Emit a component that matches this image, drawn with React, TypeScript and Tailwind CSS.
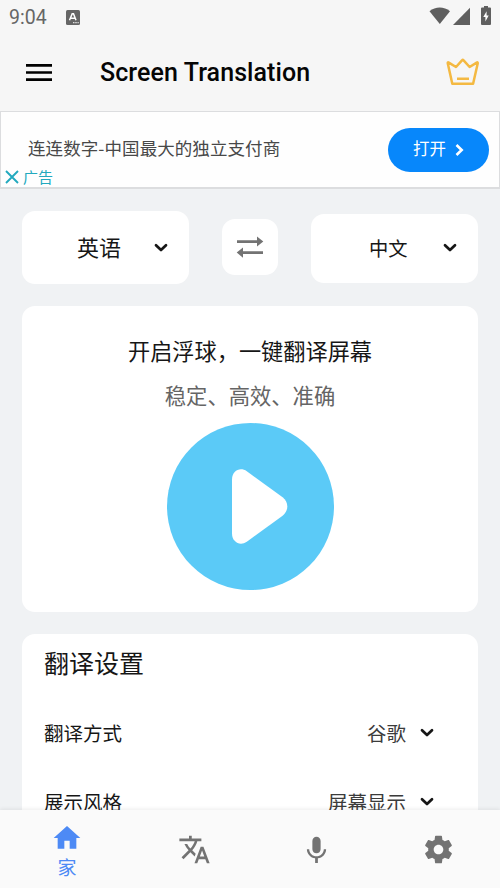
import React from "react";

const cjk = "font-['Noto_Sans_CJK_SC',sans-serif]";

function Chevron({ className = "" }: { className?: string }) {
  return (
    <svg className={className} width="14" height="10" viewBox="0 0 14 10" fill="none" stroke="#161616" strokeWidth="2.7" strokeLinecap="round" strokeLinejoin="round">
      <path d="M2 2.2 7 7l5-4.8" />
    </svg>
  );
}

function StatusBar() {
  return (
    <div className="flex h-[34px] items-center pl-[9px] pr-[9px] text-[#666]">
      <span className="pt-px text-[19.5px] leading-none">9:04</span>
      <svg className="ml-[19px]" width="14" height="15" viewBox="0 0 14 15">
        <rect width="14" height="15" rx="1.5" fill="#666" />
        <path d="M3.5 10.3 6.2 3.8h1.3l2.5 6.5M4.8 8.2h4.2" fill="none" stroke="#fff" strokeWidth="1.5" />
        <path d="M7.2 12.6h1.2m1 0h1.2m1 0h1" stroke="#fff" strokeWidth="1.2" />
      </svg>
      <svg className="-mt-[3px] ml-auto" width="22" height="19" viewBox="0 0 22 19" fill="#5f5f5f">
        <path d="M.5 5.2C6.5.3 15 .3 21 5.2L10.8 18z" />
      </svg>
      <svg className="-mt-[2px] ml-[2px]" width="17" height="18" viewBox="0 0 17 18" fill="#5f5f5f">
        <path d="M17 .8V18H0z" />
      </svg>
      <svg className="-mt-[3px] ml-[11px]" width="10" height="19" viewBox="0 0 10 19">
        <path d="M3 0h4v1.4h2q1 0 1 1V18q0 1-1 1H1q-1 0-1-1V2.4q0-1 1-1h2z" fill="#5f5f5f" />
        <path d="M5.6 5.2v4.2h2.1l-3.3 6v-4.5H2.3z" fill="#fff" />
      </svg>
    </div>
  );
}

function Header() {
  return (
    <div className="flex h-[77px] items-center pl-[26px] pr-[20px]">
      <svg width="26" height="17" viewBox="0 0 26 17" stroke="#000" strokeWidth="2.7">
        <path d="M0 1.4h26M0 8.5h26M0 15.6h26" />
      </svg>
      <h1 className="ml-[48px] whitespace-nowrap text-[25px] font-medium leading-none tracking-[0.08px] text-[#050505]">Screen Translation</h1>
      <svg className="-mt-[2px] ml-auto" width="35" height="28" viewBox="0 0 35 28" fill="none" stroke="#f4b942" strokeWidth="2.5" strokeLinejoin="round">
        <path d="M7.3 25.8h20.8L32.7 5.4q.2-1.5-1-.8L24.6 9 18.6 2.3q-.8-.8-1.6 0L11 9 3.8 4.6q-1.3-.7-1 .8zM12 20.7h12" />
      </svg>
    </div>
  );
}

function AdBanner() {
  return (
    <div className="flex h-[78px] border border-b-2 border-[#dcdddf] bg-[#fefefe]">
      <div className="flex flex-col">
        <p className={"ml-[27px] mt-[23px] whitespace-nowrap text-[17.5px] leading-[26px] tracking-[0.08px] text-[#484848] " + cjk}>连连数字-中国最大的独立支付商</p>
        <div className="ml-[4px] mt-[7px] flex items-center gap-[4px]">
          <svg width="14" height="14" viewBox="0 0 14 14" stroke="#22a9be" strokeWidth="1.9">
            <path d="m1 1 12 12M13 1 1 13" />
          </svg>
          <span className={"text-[15px] leading-[18px] text-[#22a9be] " + cjk}>广告</span>
        </div>
      </div>
      <button className={"ml-auto mr-[10px] mt-[16px] flex h-[44px] w-[101px] items-center rounded-full bg-[#0787fb] pl-[25px] text-[16.5px] leading-none text-white " + cjk}>
        <span className="-mt-[3px]">打开</span>
        <svg className="ml-[9px]" width="9" height="12" viewBox="0 0 9 12" fill="none" stroke="#fff" strokeWidth="2.6">
          <path d="m1.5 1 5.2 5-5.2 5" />
        </svg>
      </button>
    </div>
  );
}

function LanguageRow() {
  return (
    <div className={"mt-[22px] flex h-[73px] items-center justify-between " + cjk}>
      <div className="flex h-[73px] w-[167px] items-center rounded-[13px] bg-white pl-[55px]">
        <span className="-mt-[3px] text-[22px] leading-none text-[#161616]">英语</span>
        <Chevron className="ml-[33px]" />
      </div>
      <div className="-mt-[2px] flex size-14 items-center justify-center rounded-[13px] bg-white">
        <svg width="28" height="22" viewBox="0 0 28 22" fill="#737373">
          <path d="M1 4.2h20V.5l6.3 5.1-6.3 5V7H1zM27 18H7v3.7L.7 16.6 7 11.5v3.7h20z" />
        </svg>
      </div>
      <div className="mt-[1px] flex h-[69px] w-[167px] items-center rounded-[13px] bg-white pl-[58px]">
        <span className="mt-[2px] text-[19.3px] leading-none text-[#161616]">中文</span>
        <Chevron className="ml-[35px]" />
      </div>
    </div>
  );
}

function LaunchCard() {
  return (
    <div className={"mt-[22px] flex h-[306px] flex-col items-center rounded-[13px] bg-white " + cjk}>
      <p className="mt-[28px] text-[22.2px] leading-[32px] text-[#161616]">开启浮球，一键翻译屏幕</p>
      <p className="mt-[13px] text-[21.3px] leading-[32px] text-[#656565]">稳定、高效、准确</p>
      <svg className="mt-[12px] shrink-0" width="167" height="167" viewBox="0 0 167 167">
        <circle cx="83.5" cy="83.5" r="83.5" fill="#5bcaf7" />
        <path d="M65 56.5c0-8.500 8-13 14.800-8.200l35.800 26c6.300 5 6.300 13.400 0 18.400l-35.800 26c-6.800 4.800-14.800.3-14.800-8.200z" fill="#fff" />
      </svg>
    </div>
  );
}

function SettingRow({ label, value }: { label: string; value: string }) {
  return (
    <div className="flex h-[69px] items-center text-[19.5px] leading-none">
      <span className="text-[#161616]">{label}</span>
      <span className="ml-auto text-[#3b3b3b]">{value}</span>
      <Chevron className="ml-[14px] mr-[22px]" />
    </div>
  );
}

function SettingsCard() {
  return (
    <div className={"mt-[22px] h-[220px] shrink-0 rounded-t-[13px] bg-white px-[22px] " + cjk}>
      <h2 className="pt-[10px] text-[25px] leading-[36px] text-[#161616]">翻译设置</h2>
      <div className="mt-[18px]">
        <SettingRow label="翻译方式" value="谷歌" />
        <SettingRow label="展示风格" value="屏幕显示" />
      </div>
    </div>
  );
}

function BottomNav() {
  return (
    <nav className="relative flex h-[78px] shrink-0 bg-[#fafafa] pl-[5px] shadow-[0_-1px_4px_rgba(0,0,0,0.08)]">
      <div className="flex w-[124px] shrink-0 flex-col items-center pt-[12px] text-[#4d8af5]">
        <svg width="32" height="32" viewBox="0 0 24 24" fill="currentColor">
          <path d="M10 20v-6h4v6h5v-8h3L12 3 2 12h3v8z" />
        </svg>
        <span className={"mt-[1px] text-[19px] leading-[24px] " + cjk}>家</span>
      </div>
      <div className="ml-[1px] flex w-[129px] shrink-0 items-center justify-center text-[#737373]">
        <svg width="33" height="33" viewBox="0 0 24 24" fill="currentColor">
          <path d="m12.87 15.07-2.54-2.51.03-.03c1.74-1.94 2.98-4.17 3.71-6.53H17V4h-7V2H8v2H1v1.99h11.17C11.5 7.92 10.44 9.75 9 11.35 8.07 10.32 7.3 9.19 6.69 8h-2c.73 1.63 1.73 3.17 2.98 4.56l-5.09 5.02L4 19l5-5 3.11 3.11.76-2.04zM18.5 10h-2L12 22h2l1.12-3h4.75L21 22h2l-4.5-12zm-2.62 7 1.62-4.33L19.12 17h-3.24z" />
        </svg>
      </div>
      <div className="flex w-[115px] shrink-0 items-center justify-center pt-[2px] text-[#737373]">
        <svg width="33" height="33" viewBox="0 0 24 24" fill="currentColor">
          <path d="M12 14c1.66 0 2.99-1.34 2.99-3L15 5c0-1.66-1.34-3-3-3S9 3.34 9 5v6c0 1.66 1.34 3 3 3zm5.3-3c0 3-2.54 5.1-5.3 5.1S6.7 14 6.7 11H5c0 3.41 2.72 6.23 6 6.72V21h2v-3.28c3.28-.48 6-3.3 6-6.72h-1.7z" />
        </svg>
      </div>
      <div className="flex w-[126px] items-center justify-center pl-[3px] text-[#737373]">
        <svg className="shrink-0" width="33" height="33" viewBox="0 0 24 24" fill="currentColor">
          <path d="M19.43 12.98c.04-.32.07-.64.07-.98s-.03-.66-.07-.98l2.11-1.65c.19-.15.24-.42.12-.64l-2-3.46c-.12-.22-.39-.3-.61-.22l-2.49 1c-.52-.4-1.08-.73-1.69-.98l-.38-2.65C14.46 2.18 14.25 2 14 2h-4c-.25 0-.46.18-.49.42l-.38 2.65c-.61.25-1.17.59-1.69.98l-2.49-1c-.23-.09-.49 0-.61.22l-2 3.46c-.13.22-.07.49.12.64l2.11 1.65c-.04.32-.07.65-.07.98s.03.66.07.98l-2.11 1.65c-.19.15-.24.42-.12.64l2 3.46c.12.22.39.3.61.22l2.49-1c.52.4 1.08.73 1.69.98l.38 2.65c.03.24.24.42.49.42h4c.25 0 .46-.18.49-.42l.38-2.65c.61-.25 1.17-.59 1.69-.98l2.49 1c.23.09.49 0 .61-.22l2-3.46c.12-.22.07-.49-.12-.64l-2.11-1.65zM12 15.5c-1.93 0-3.5-1.57-3.5-3.5s1.57-3.5 3.5-3.5 3.5 1.57 3.5 3.5-1.57 3.5-3.5 3.5z" />
        </svg>
      </div>
    </nav>
  );
}

export default function App() {
  return (
    <div className="flex h-[888px] w-[500px] flex-col overflow-hidden bg-[#f0f2f4] font-['Roboto',sans-serif]">
      <header className="h-[111px] shrink-0 bg-[#f6f6f6]">
        <StatusBar />
        <Header />
      </header>
      <main className="h-[699px] shrink-0 overflow-hidden">
        <AdBanner />
        <div className="px-[22px]">
          <LanguageRow />
          <LaunchCard />
          <SettingsCard />
        </div>
      </main>
      <BottomNav />
    </div>
  );
}
